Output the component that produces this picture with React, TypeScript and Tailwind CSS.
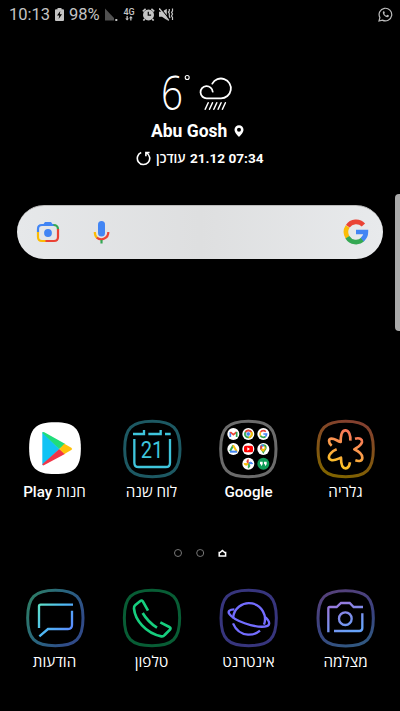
import React from "react";

const FONT = "font-['Roboto','Open_Sans','Liberation_Sans',sans-serif]";

// Rounded-square outline, centred on the origin; icons are drawn on a grid of three units per pixel.
const RING = "M0-83C62-83 83-62 83 0S62 83 0 83-83 62-83 0-62-83 0-83Z";

function Icon({ dx, dy, children }: { dx: number; dy: number; children: React.ReactNode }) {
  return (
    <svg className="h-[61px] w-[61px] shrink-0" viewBox="0 0 183 183" fill="none">
      <g transform={`translate(${dx} ${dy})`}>{children}</g>
    </svg>
  );
}

function Shortcut({ label, children }: { label: React.ReactNode; children: React.ReactNode }) {
  return (
    <div className="flex w-[97px] flex-col items-center">
      {children}
      <div className="mt-[3px] flex h-5 items-center gap-1 whitespace-nowrap text-[15.2px] leading-5 text-white">{label}</div>
    </div>
  );
}

function GoogleG() {
  return (
    <g fill="none" strokeWidth="4.6">
      <path d="M-8.2-5.7A10 10 0 0 1 7.4-7" stroke="#ea4335" />
      <path d="M-8.4 5.4A10 10 0 0 1-8.4-5.4" stroke="#fbbc05" />
      <path d="M7 7.2A10 10 0 0 1-8.6 5.2" stroke="#34a853" />
      <path d="M0 0H9.9Q9.9 4.6 6.2 7.8" stroke="#4285f4" />
    </g>
  );
}

function StatusBar() {
  return (
    <div className="flex h-7 items-center pl-[9px] pr-[7px] text-[16.5px] leading-7 text-[#c4c4c4]">
      <span className="w-[46px] pt-px">10:13</span>
      <svg className="h-[13px] w-[9px]" viewBox="0 0 9 13">
        <path d="M2.5 0H6.5V1.3H8Q9 1.3 9 2.3V12Q9 13 8 13H1Q0 13 0 12V2.3Q0 1.3 1 1.3H2.5Z" fill="#c4c4c4" />
        <path d="M5.3 3 2 7.6H4.3L3.6 11 7 6.3H4.8Z" fill="#000" />
      </svg>
      <span className="ml-[5px] w-[35px] pt-px">98%</span>
      <svg className="h-[13px] w-[14px]" viewBox="0 0 14 13">
        <path d="M1 0.5 10 10V12.5H1Z" fill="#505050" />
        <path d="M11.3 11H13.3V13H11.3Z" fill="#c4c4c4" />
      </svg>
      <div className="ml-[5px] flex w-[12px] flex-col items-center">
        <span className="h-[8px] text-[9px] font-medium leading-[8px]">4G</span>
        <svg className="h-[5px] w-[8px]" viewBox="0 0 8 5" fill="#c4c4c4">
          <path d="M1.5 0H2.8V2.4H4L2.1 4.6.2 2.4H1.5ZM5.2 4.6V2.2H4L5.9 0 7.8 2.2H6.5V4.6Z" />
        </svg>
      </div>
      <svg className="ml-[7px] h-[13px] w-[13px]" viewBox="0 0 13 13">
        <path d="M.8 3.3 3.6.9M12.2 3.3 9.4.9M2.7 11 1.4 12.6M10.3 11 11.6 12.6" stroke="#c4c4c4" strokeWidth="1.7" />
        <circle cx="6.5" cy="6.9" r="5.5" fill="#c4c4c4" />
        <path d="M6.3 3.8V7.2H9.1" stroke="#111" strokeWidth="1.3" fill="none" />
      </svg>
      <svg className="ml-[4px] h-[13px] w-[15px]" viewBox="0 0 15 13">
        <path d="M0 3.8H3L7.8.8V12L3 8.7H0Z" fill="#c4c4c4" />
        <path d="M1.4 0 11 12" stroke="#000" strokeWidth="1.1" />
        <path d="M.2.4 9.7 12.5" stroke="#c4c4c4" strokeWidth="1.4" />
        <path d="M10.3 1V3L9.4 4 10.3 5.3V8L11 10M13.5.4V3L12.5 4.3 13.5 6 12.5 8 13.5 9.5V12" stroke="#c4c4c4" strokeWidth="1.2" fill="none" />
      </svg>
      <svg className="ml-auto h-[15px] w-[15px]" viewBox="0 0 15 15" fill="none">
        <path d="M1 14 1.9 10.6A6.3 6.3 0 1 1 4.4 13.1Z" stroke="#bcbcbc" strokeWidth="1.2" />
        <path d="M5.3 4.3C3.3 6.7 8 11.6 10.6 9.8L11 8.6 9.2 7.8 8.3 8.7C7.3 8.3 6.6 7.6 6.2 6.7L6.9 5.9 6.2 4.2Z" fill="#bcbcbc" />
      </svg>
    </div>
  );
}

function Weather() {
  return (
    <div className="flex flex-col items-center pt-[43px] text-white">
      <div className="flex h-[45px] w-[78px] items-start">
        <svg className="-my-[15px] h-[75px] w-[32px] shrink-0" viewBox="0 -15 32 75">
          <text x="0" y="38.5" fontSize="48" textLength="22" lengthAdjust="spacingAndGlyphs" fill="#fff" className="font-['Open_Sans',sans-serif] font-light">6</text>
          <circle cx="26.2" cy="6.5" r="2" fill="none" stroke="#fff" strokeWidth="1.1" />
        </svg>
        <svg className="ml-[6px] h-[45px] w-[36px] shrink-0" viewBox="0 0 36 45" fill="none" stroke="#fff" strokeWidth="1.8" strokeLinecap="round">
          <path d="M13.7 20.700A6.100 6.100 0 1 0 7.900 27.300H22A9.900 9.900 0 1 0 13.300 12.600" />
          <path d="M9.200 31.800 6.200 38.300M13.500 31.800 10.500 38.300M17.800 31.800 14.800 38.300M22.100 31.800 19.100 38.300M26.400 31.800 23.400 38.300" strokeWidth="1.5" />
        </svg>
      </div>
      <div className="-ml-[5px] mt-[3px] flex h-6 items-center text-[17.5px] font-bold leading-6">
        <span className="w-[78px] whitespace-nowrap">Abu Gosh</span>
        <svg className="ml-[5px] h-[12px] w-[10px]" viewBox="0 0 10 12">
          <path fillRule="evenodd" d="M5 .2A4.5 4.5 0 0 0 .5 4.7C.5 8 5 11.8 5 11.8S9.5 8 9.5 4.7A4.5 4.5 0 0 0 5 .2ZM5 2.7A2 2 0 1 1 5 6.7 2 2 0 0 1 5 2.7Z" fill="#fff" />
        </svg>
      </div>
      <div className="mt-[5px] flex h-5 w-[128px] items-center text-[13.6px] font-bold leading-5">
        <svg className="h-[15px] w-[15px] shrink-0" viewBox="0 0 15 15" fill="none" stroke="#fff" strokeWidth="1.6">
          <path d="M5.200 1.600A6.200 6.200 0 1 0 10.500 1.900M9.900 5.200V1.500H13.600" />
        </svg>
        <span className="ml-[5px] w-[34px] whitespace-nowrap text-[13.5px] font-semibold">עודכן</span>
        <span className="whitespace-nowrap">21.12 07:34</span>
      </div>
    </div>
  );
}

function Search() {
  return (
    <div className="mx-[17px] mt-[37px] flex h-[54px] items-center rounded-full border-t border-[#bbb] bg-linear-to-r from-[#e6e8ea] via-[#dedfe0] to-[#e8eaec] pb-[2px] pl-[19px] pr-[14px]">
      <svg className="h-[24px] w-[24px]" viewBox="0 0 24 24" fill="none" strokeWidth="2.2">
        <path d="M2 12V9Q2 5 6 5H18" stroke="#4285f4" />
        <path d="M7 4.8 9 2H15L17 4.8Z" fill="#4285f4" />
        <path d="M17.5 5Q22 5 22 9.4" stroke="#34a853" />
        <path d="M22 9V17Q22 21 18 21H9" stroke="#ea4335" />
        <path d="M2 12V17Q2 21 6 21H9.5" stroke="#fbbc05" />
        <circle cx="12" cy="13" r="3.9" fill="#4285f4" />
      </svg>
      <svg className="ml-[33px] h-[24px] w-[18px]" viewBox="0 0 18 24" fill="none" strokeWidth="2.2">
        <rect x="5" y="1" width="7" height="15.5" rx="3.5" fill="#4285f4" />
        <path d="M1.8 12Q1.8 16 4.2 18" stroke="#fbbc05" />
        <path d="M3.8 17.6A7 7 0 0 0 15.3 12" stroke="#ea4335" />
        <path d="M8.5 20V23.5" stroke="#34a853" />
      </svg>
      <svg className="ml-auto h-[26px] w-[26px]" viewBox="-13 -13 26 26"><GoogleG /></svg>
    </div>
  );
}

function Folder() {
  return (
    <Icon dx={-39} dy={-24}>
      <path transform="translate(130 117)" d={RING} stroke="#6b6b6b" strokeWidth="9" />
      <g fill="#fff">
        {[[85, 72], [130, 72], [175, 72], [85, 117], [130, 117], [175, 117], [130, 161]].map(([x, y]) => (
          <circle key={`${x}-${y}`} cx={x} cy={y} r="18" />
        ))}
      </g>
      <g strokeWidth="5">
        <path d="M76 81V66" stroke="#4285f4" />
        <path d="M76 66 85 74 95 66" stroke="#ea4335" />
        <path d="M95 66V81" stroke="#34a853" />
      </g>
      <circle cx="130" cy="72" r="13" fill="#34a853" />
      <path d="M119 65A13 13 0 0 1 142 66H130V72Z" fill="#ea4335" />
      <path d="M142 66A13 13 0 0 1 130 85L134 75 130 66Z" fill="#fbbc05" />
      <circle cx="130" cy="72" r="6.5" fill="#4285f4" stroke="#fff" strokeWidth="2" />
      <g transform="translate(175 72)"><GoogleG /></g>
      <g strokeWidth="6">
        <path d="M85 106 75 124" stroke="#34a853" />
        <path d="M84 106 96 125" stroke="#fbbc05" />
        <path d="M75 125H96" stroke="#4285f4" />
      </g>
      <rect x="117" y="107" width="27" height="20" rx="5" fill="#f00" />
      <path d="M127 112V122L135 117Z" fill="#fff" />
      <path d="M175 133C173 124 165 120 165 113A10 10 0 0 1 185 113C185 120 177 124 175 133Z" fill="#34a853" />
      <path d="M168 120C163 114 165 103 175 103L177 110Z" fill="#4285f4" />
      <path d="M165 112 169 106 174 112 167 120Z" fill="#ea4335" />
      <path d="M167 120 178 107 183 115 175 126Z" fill="#fbbc05" />
      <circle cx="175" cy="113" r="3.5" fill="#fff" />
      <path d="M130 161V148A7 7 0 0 0 130 161" fill="#ea4335" stroke="#ea4335" strokeWidth="2" />
      <path d="M130 161H143A7 7 0 0 0 130 161" fill="#4285f4" stroke="#4285f4" strokeWidth="3" />
      <path d="M130 161V174A7 7 0 0 0 130 161" fill="#34a853" stroke="#34a853" strokeWidth="3" />
      <path d="M130 161H117A7 7 0 0 0 130 161" fill="#fbbc05" stroke="#fbbc05" strokeWidth="3" />
      <circle cx="175" cy="161" r="18" fill="#0f9d58" />
      <path d="M165 155H173V163L168 169V163H165ZM177 155H185V163L180 169V163H177Z" fill="#fff" />
    </Icon>
  );
}

export default function App() {
  return (
    <div className={`relative h-[711px] w-[400px] overflow-hidden bg-black ${FONT}`}>
      <StatusBar />
      <Weather />
      <Search />
      <div className="absolute right-0 top-[194px] h-[137px] w-[5px] rounded-l-[4px] bg-[#aaa]" />

      <div className="ml-[6px] mt-[159px] flex">
        <Shortcut label={<><span className="font-medium">Play</span><span>חנות</span></>}>
          <Icon dx={-27} dy={-24}>
            <path transform="translate(120 114.500) scale(.935)" d={RING} fill="#fff" />
            <path d="M82 66V166L134 117Z" fill="#12c3f4" />
            <path d="M82 69Q83 64 88 67L151 102 133 117Z" fill="#20dd7b" />
            <path d="M82 163Q83 168 88 165L151 131 133 117Z" fill="#f23648" />
            <path d="M148 101 169 113Q174 117 169 120L148 132 133 117Z" fill="#ffc20a" />
          </Icon>
        </Shortcut>
        <Shortcut label="לוח שנה">
          <Icon dx={-33} dy={-24}>
            <path transform="translate(127 117)" d={RING} stroke="#1d5963" strokeWidth="9" />
            <g stroke="#3fc5dc" strokeWidth="7">
              <path d="M73 87V158Q73 171 86 171H167Q180 171 180 158V87" />
              <path d="M69 72H102V60M115 72H152V60M165 72H182" />
            </g>
            <text x="92" y="144" fontSize="70" textLength="68" lengthAdjust="spacingAndGlyphs" fill="#3fc5dc">21</text>
          </Icon>
        </Shortcut>
        <Shortcut label={<span className="font-medium">Google</span>}><Folder /></Shortcut>
        <Shortcut label="גלריה">
          <Icon dx={-45} dy={-24}>
            <defs>
              <linearGradient id="gal" gradientUnits="userSpaceOnUse" x1="165" y1="60" x2="120" y2="175"><stop stopColor="#f9705a" /><stop offset=".5" stopColor="#fb9a4c" /><stop offset="1" stopColor="#fcc722" /></linearGradient>
              <linearGradient id="galr" gradientUnits="userSpaceOnUse" x1="23" y1="-83" x2="-22" y2="83"><stop stopColor="#83402f" /><stop offset="1" stopColor="#806300" /></linearGradient>
            </defs>
            <path transform="translate(137 117)" d={RING} stroke="url(#galr)" strokeWidth="9" />
            <path d="M95 107C84 98 85 86 95 86C105 86 111 93 122 96C122 80 125 61 136 61C147 61 152 76 151 92M165 86C180 82 187 88 186 96C184 107 174 111 163 118C176 124 187 130 187 143C187 153 178 155 166 151M150 157C148 169 144 175 137 175C127 175 123 160 123 143C111 148 102 153 94 150C84 147 85 138 92 130C97 124 102 121 110 118" stroke="url(#gal)" strokeWidth="8" strokeLinejoin="round" />
          </Icon>
        </Shortcut>
      </div>

      <div className="mt-[46px] flex h-[10px] items-center pl-[173px]">
        <svg className="h-[10px] w-[56px]" viewBox="0 0 56 10" fill="none">
          <circle cx="5" cy="5" r="3.5" stroke="#777" />
          <circle cx="27.2" cy="5" r="3.5" stroke="#777" />
          <path d="M46.2 7.900V4.500H47.100L49.400 2.500 51.700 4.500H52.600V7.900Z" stroke="#fff" strokeWidth="1.5" />
        </svg>
      </div>

      <div className="ml-[6px] mt-[30px] flex">
        <Shortcut label="הודעות">
          <Icon dx={-27} dy={-144}>
            <defs>
              <linearGradient id="msg" gradientUnits="userSpaceOnUse" x1="72" y1="190" x2="174" y2="270"><stop stopColor="#60e2c5" /><stop offset=".45" stopColor="#4fbcf3" /><stop offset="1" stopColor="#5c87ff" /></linearGradient>
              <linearGradient id="msgr" gradientUnits="userSpaceOnUse" x1="-61" y1="-74" x2="79" y2="6"><stop stopColor="#2d7a68" /><stop offset=".5" stopColor="#296380" /><stop offset="1" stopColor="#304b88" /></linearGradient>
            </defs>
            <path transform="translate(121 234)" d={RING} stroke="url(#msgr)" strokeWidth="9" />
            <path d="M72 264V199Q72 194 77 194H174M171 212V255Q171 267 159 267H99L73 289" stroke="url(#msg)" strokeWidth="7" />
          </Icon>
        </Shortcut>
        <Shortcut label="טלפון">
          <Icon dx={-33} dy={-144}>
            <path transform="translate(126 234)" d={RING} stroke="#085d35" strokeWidth="9" />
            <path d="M114 212 99 185Q96 179 91 183L76 195Q71 199 72 206C75 239 106 279 154 289Q160 290 164 285L180 269Q184 264 178 261L151 247M98 219Q114 246 141 263" stroke="#16ce7e" strokeWidth="8" />
          </Icon>
        </Shortcut>
        <Shortcut label="אינטרנט">
          <Icon dx={-39} dy={-144}>
            <g stroke="#736dff" strokeWidth="7">
              <path transform="translate(131 234)" d={RING} stroke="#37357d" strokeWidth="9" />
              <path d="M84 235A48 48 0 1 1 177 254" />
              <path d="M88 208C73 208 67 215 74 223C88 242 145 263 179 260C196 258 198 246 179 230" />
              <path d="M84 250Q97 281 129 284Q150 285 165 272" />
            </g>
          </Icon>
        </Shortcut>
        <Shortcut label="מצלמה">
          <Icon dx={-45} dy={-24}>
            <defs>
              <linearGradient id="cam" gradientUnits="userSpaceOnUse" x1="115" y1="65" x2="158" y2="155"><stop stopColor="#9a78dc" /><stop offset="1" stopColor="#66a3fa" /></linearGradient>
              <linearGradient id="camr" gradientUnits="userSpaceOnUse" x1="-27" y1="-80" x2="28" y2="80"><stop stopColor="#54417b" /><stop offset=".55" stopColor="#39427f" /><stop offset="1" stopColor="#315781" /></linearGradient>
            </defs>
            <path transform="translate(137 115)" d={RING} stroke="url(#camr)" strokeWidth="9" />
            <g stroke="url(#cam)" strokeWidth="7">
              <path d="M85 157V85Q85 81 89 81H110L123 69H149L161 81H189M187 100V144Q187 153 178 153H102" />
              <circle cx="136" cy="116" r="19" />
            </g>
          </Icon>
        </Shortcut>
      </div>
    </div>
  );
}
